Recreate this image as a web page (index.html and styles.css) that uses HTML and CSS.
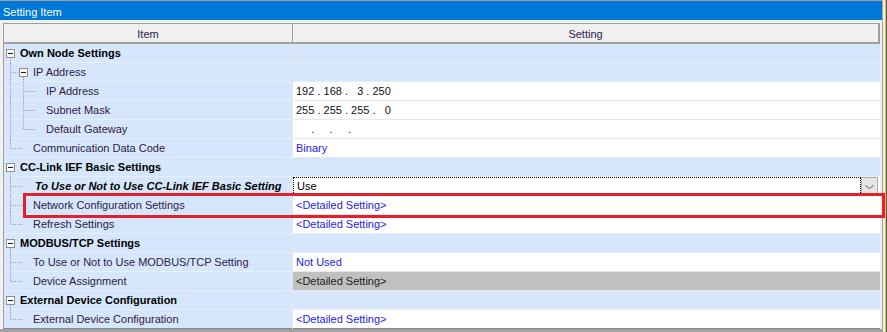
FILE: index.html
```html
<!DOCTYPE html>
<html>
<head>
<meta charset="utf-8">
<link rel="stylesheet" href="styles.css">
</head>
<body>
<div class="app">
  <div class="pane">
    <div class="topline"></div>
    <div class="titlebar">Setting Item</div>
    <div class="gap"></div>
    <div class="gridwrap">
      <div class="grid">
        <div class="hdr"><div class="hi">Item</div><div class="hs">Setting</div></div>

        <div class="row grp">
          <div class="ic"><svg class="tree" width="16" height="19"><path class="tl" d="M6.5 14v5"/><rect class="bx" x="2.5" y="5.5" width="8" height="8"/><path class="mn" d="M4 9.5h5"/></svg><span class="b">Own Node Settings</span></div>
          <div class="sc"></div>
        </div>
        <div class="row grp">
          <div class="ic"><svg class="tree" width="29" height="19"><path class="tl" d="M6.5 0v19M7 9.5h8M19.5 14v5"/><rect class="bx" x="15.5" y="5.5" width="8" height="8"/><path class="mn" d="M17 9.5h5"/></svg><span>IP Address</span></div>
          <div class="sc"></div>
        </div>
        <div class="row">
          <div class="ic"><svg class="tree" width="42" height="19"><path class="tl" d="M6.5 0v19M19.5 0v19M20 9.5h11"/></svg><span>IP Address</span></div>
          <div class="sc">192 . 168 .   3 . 250</div>
        </div>
        <div class="row">
          <div class="ic"><svg class="tree" width="42" height="19"><path class="tl" d="M6.5 0v19M19.5 0v19M20 9.5h11"/></svg><span>Subnet Mask</span></div>
          <div class="sc">255 . 255 . 255 .   0</div>
        </div>
        <div class="row">
          <div class="ic"><svg class="tree" width="42" height="19"><path class="tl" d="M6.5 0v19M19.5 0v10M20 9.5h11"/></svg><span>Default Gateway</span></div>
          <div class="sc">     .     .     .</div>
        </div>
        <div class="row">
          <div class="ic"><svg class="tree" width="29" height="19"><path class="tl" d="M6.5 0v10M7 9.5h11"/></svg><span>Communication Data Code</span></div>
          <div class="sc blue">Binary</div>
        </div>

        <div class="row grp">
          <div class="ic"><svg class="tree" width="16" height="19"><path class="tl" d="M6.5 14v5"/><rect class="bx" x="2.5" y="5.5" width="8" height="8"/><path class="mn" d="M4 9.5h5"/></svg><span class="b">CC-Link IEF Basic Settings</span></div>
          <div class="sc"></div>
        </div>
        <div class="row">
          <div class="ic"><svg class="tree" width="29" height="19"><path class="tl" d="M6.5 0v19M7 9.5h11"/></svg><span class="bi">To Use or Not to Use CC-Link IEF Basic Setting</span></div>
          <div class="sc combo"><div class="field">Use</div><div class="btn"><svg width="15" height="15"><path d="M3.5 7.5l4 3 4-3" fill="none" stroke="#5a5a5a"/></svg></div></div>
        </div>
        <div class="row">
          <div class="ic"><svg class="tree" width="29" height="19"><path class="tl" d="M6.5 0v19M7 9.5h11"/></svg><span>Network Configuration Settings</span></div>
          <div class="sc blue">&lt;Detailed Setting&gt;</div>
        </div>
        <div class="row">
          <div class="ic"><svg class="tree" width="29" height="19"><path class="tl" d="M6.5 0v10M7 9.5h11"/></svg><span>Refresh Settings</span></div>
          <div class="sc blue">&lt;Detailed Setting&gt;</div>
        </div>

        <div class="row grp">
          <div class="ic"><svg class="tree" width="16" height="19"><path class="tl" d="M6.5 14v5"/><rect class="bx" x="2.5" y="5.5" width="8" height="8"/><path class="mn" d="M4 9.5h5"/></svg><span class="b">MODBUS/TCP Settings</span></div>
          <div class="sc"></div>
        </div>
        <div class="row">
          <div class="ic"><svg class="tree" width="29" height="19"><path class="tl" d="M6.5 0v19M7 9.5h11"/></svg><span>To Use or Not to Use MODBUS/TCP Setting</span></div>
          <div class="sc blue">Not Used</div>
        </div>
        <div class="row">
          <div class="ic"><svg class="tree" width="29" height="19"><path class="tl" d="M6.5 0v10M7 9.5h11"/></svg><span>Device Assignment</span></div>
          <div class="sc dis">&lt;Detailed Setting&gt;</div>
        </div>

        <div class="row grp">
          <div class="ic"><svg class="tree" width="16" height="19"><path class="tl" d="M6.5 14v5"/><rect class="bx" x="2.5" y="5.5" width="8" height="8"/><path class="mn" d="M4 9.5h5"/></svg><span class="b">External Device Configuration</span></div>
          <div class="sc"></div>
        </div>
        <div class="row last">
          <div class="ic"><svg class="tree" width="29" height="19"><path class="tl" d="M6.5 0v10M7 9.5h11"/></svg><span>External Device Configuration</span></div>
          <div class="sc blue">&lt;Detailed Setting&gt;</div>
        </div>
      </div>
    </div>
    <div class="footer"></div>
  </div>
  <div class="edge"></div>
  <div class="hl"></div>
</div>
</body>
</html>
```
FILE: styles.css
```css
* { box-sizing: border-box; margin: 0; padding: 0; }
body {
  background: #f0f0f0;
  font-family: "Liberation Sans", Arial, sans-serif;
  font-size: 11px;
  width: 887px;
  height: 332px;
  overflow: hidden;
}
.app { position: relative; display: flex; width: 887px; height: 332px; }
.pane { width: 882px; display: flex; flex-direction: column; }
.topline { height: 1px; background: #a0a0a0; }
.titlebar {
  height: 19px;
  background: #0078d7;
  color: #fff;
  padding: 3px 0 0 3px;
  line-height: 16px;
}
.gap { height: 3px; }
.gridwrap { padding: 0 2px 0 3px; }
.grid { border-left: 1px solid #a0a0a0; background: #fff; }
.hdr {
  display: flex;
  height: 21px;
  border-top: 1px solid #a0a0a0;
  border-bottom: 2px solid #a0a0a0;
  background: #f0f0f0;
  color: #2e1a47;
  line-height: 20px;
  text-align: center;
}
.hi { width: 289px; border-right: 1px solid #a0a0a0; }
.hs { flex: 1; border-right: 2px solid #a0a0a0; }
.row { display: flex; height: 19px; line-height: 19px; }
.ic {
  width: 289px;
  display: flex;
  background: #d6e6fc;
  border-right: 1px solid #e3e8ef;
  box-shadow: inset 0 -1px 0 #e9eff8;
  color: #2e1a47;
  white-space: nowrap;
}
.tree { flex: none; display: block; }
.tl { fill: none; stroke: #a0a0a0; stroke-dasharray: 1 1; }
.bx { fill: #fdfdfd; stroke: #8f8f8f; }
.mn { stroke: #1a1a1a; }
.b { font-weight: bold; color: #000; }
.bi { font-weight: bold; font-style: italic; color: #000; padding-left: 2px; }
.sc {
  flex: 1;
  background: #fff;
  box-shadow: inset 0 -1px 0 #e8e8e8;
  padding-left: 3px;
  white-space: pre;
  color: #111;
}
.grp .sc { background: #d6e6fc; box-shadow: inset 0 -1px 0 #e9eff8; }
.sc.blue { color: #2323ee; }
.sc.dis { background: #c0c0c0; color: #202020; }
.row.last .ic, .row.last .sc { box-shadow: inset 0 -1px 0 #8a8a8a; }
.combo { display: flex; padding-left: 0; align-items: flex-start; }
.field {
  flex: 1;
  height: 18px;
  border: 1px dotted #000;
  padding-left: 3px;
  line-height: 17px;
  color: #000;
}
.btn {
  flex: none;
  width: 17px;
  height: 17px;
  margin-right: 2px;
  background: #e5e5e5;
  border: 1px solid #adadad;
}
.btn svg { display: block; }
.footer { height: 3px; background: #a0a0a0; }
.edge {
  width: 5px;
  background: linear-gradient(to right, #a0a0a0 0 1px, #f0f0f0 1px 3px, #e9b949 3px 4px, #5a5a5a 4px 5px);
}
.hl {
  position: absolute;
  left: 23px;
  top: 193px;
  width: 862px;
  height: 25px;
  border: 3px solid #e4202a;
}
```
